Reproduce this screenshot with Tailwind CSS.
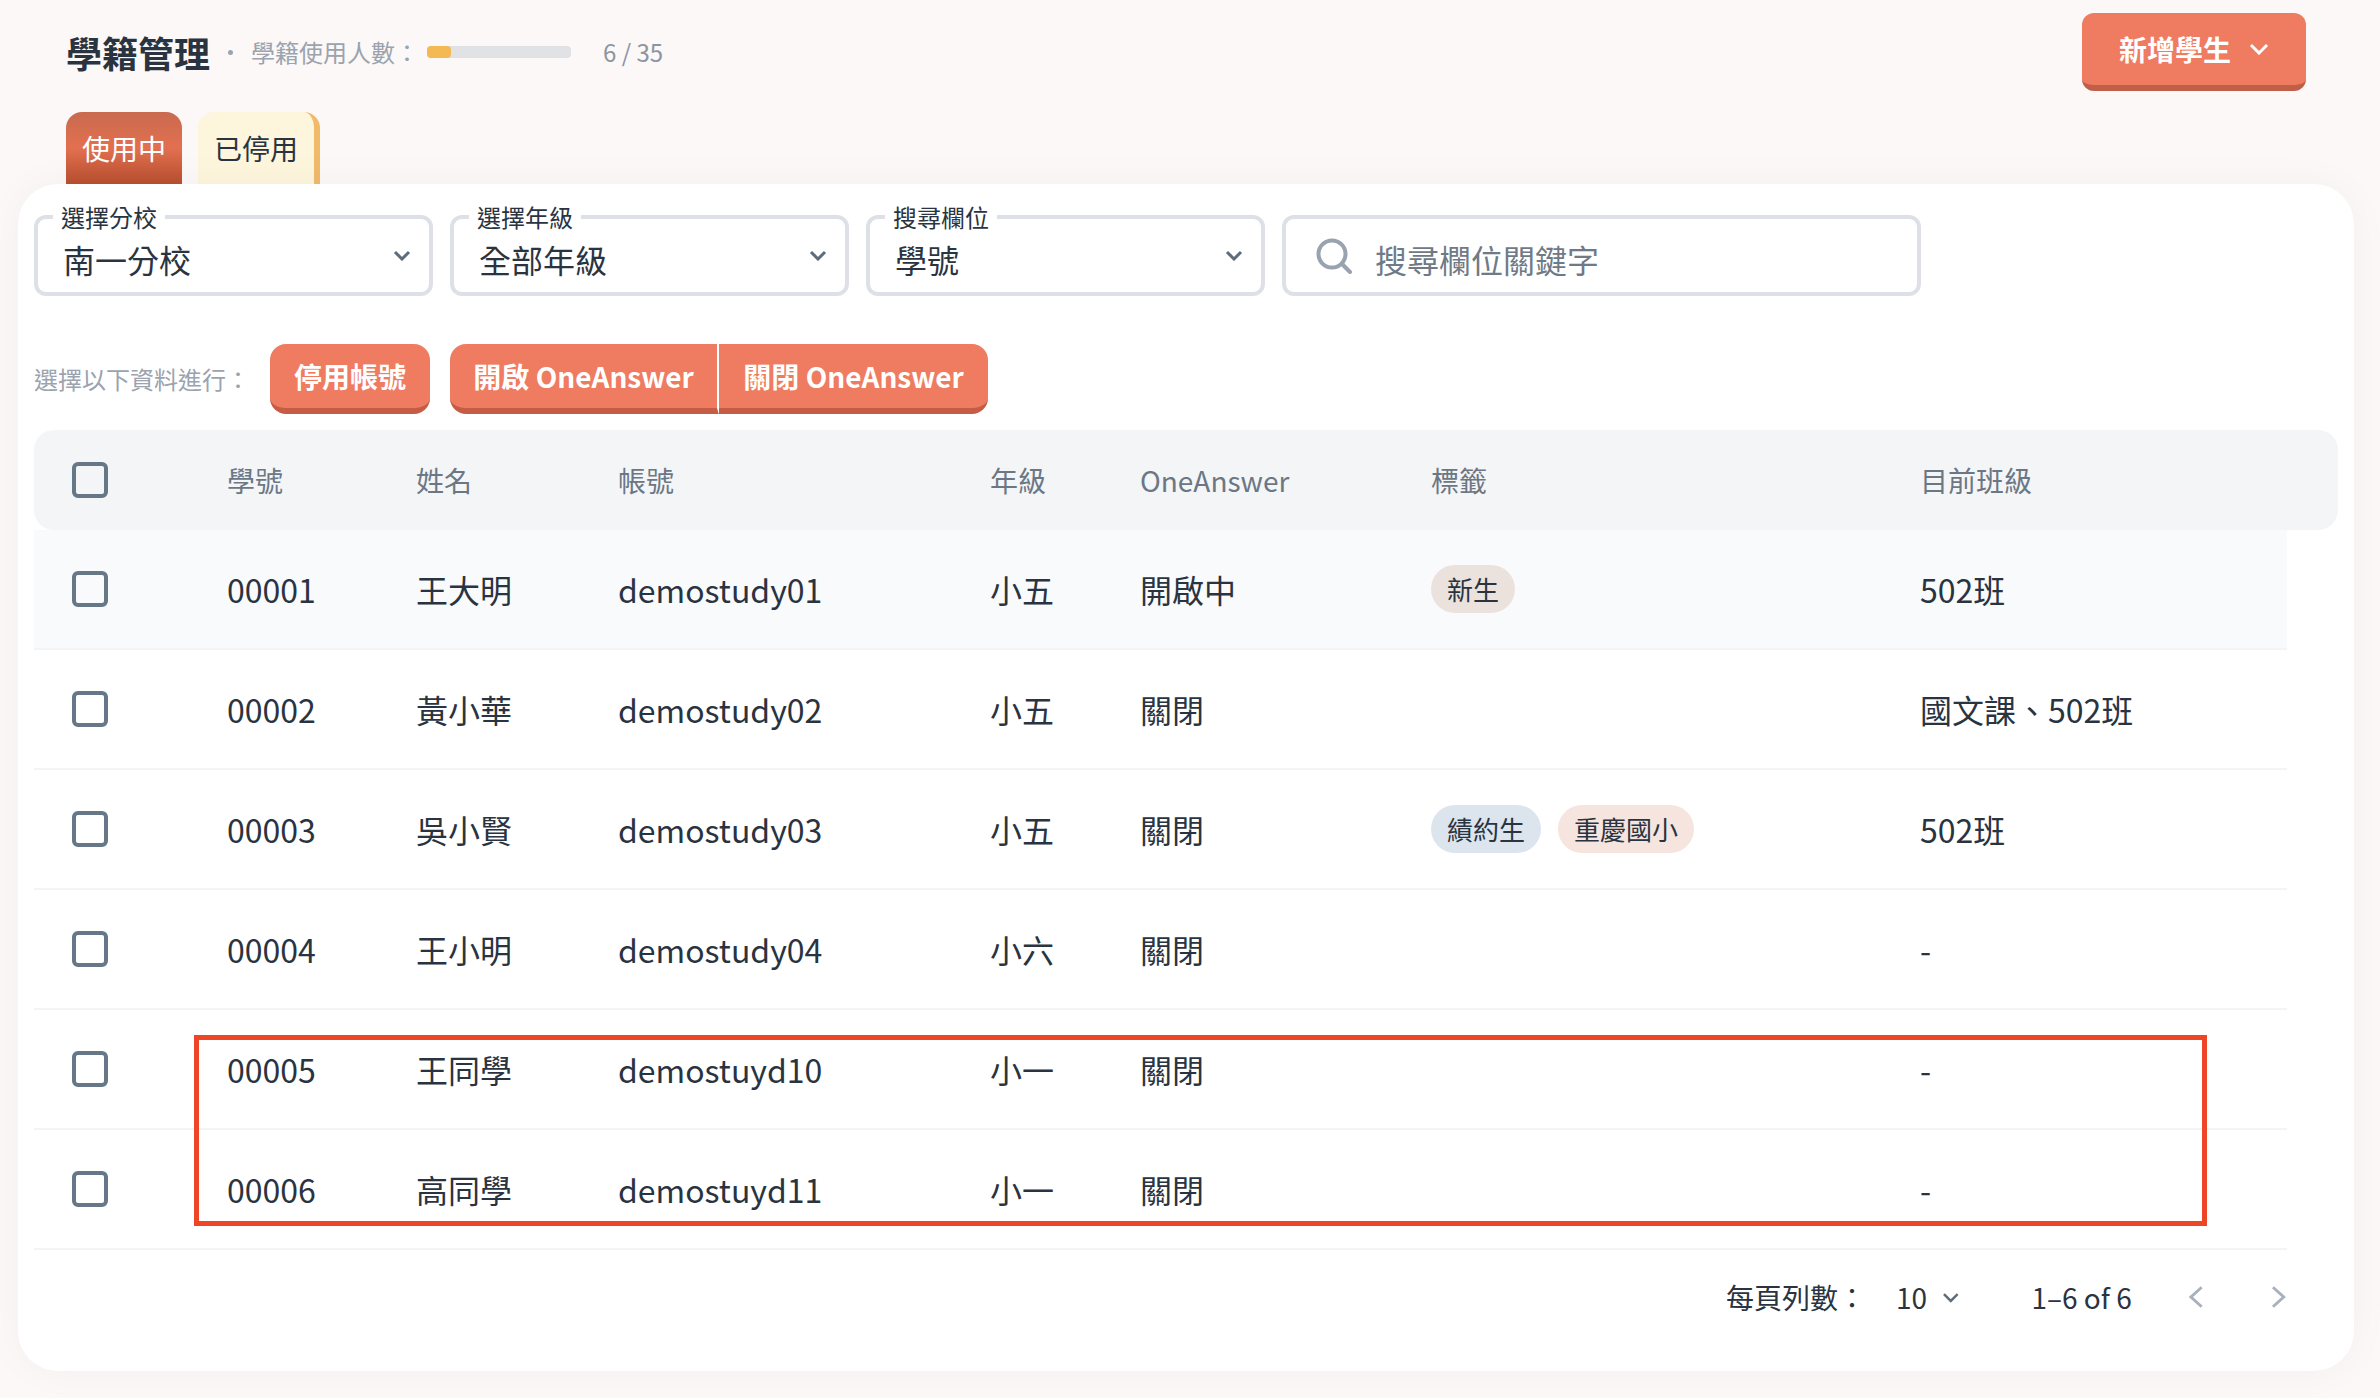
<!DOCTYPE html>
<html lang="zh-Hant">
<head>
    <meta charset="UTF-8">
    <title>學籍管理</title>
    <script src="https://cdn.jsdelivr.net/npm/@tailwindcss/browser@4"></script>
</head>
<body class="bg-[#fbf8f7] font-['Noto_Sans_CJK_TC',sans-serif] text-[#2a3441]">
<div class="w-[2380px] h-[1398px] overflow-hidden flex flex-col">

    <!-- Page header -->
    <div class="h-[112px] pl-[66px] pr-[74px] pt-[13px] flex items-start justify-between">
        <div class="flex items-center h-[78px]">
            <h1 class="text-[36px] font-bold leading-none">學籍管理</h1>
            <span class="ml-[18px] w-[5px] h-[5px] rounded-full bg-[#9ca3af]"></span>
            <span class="ml-[18px] text-[24px] text-[#9aa3ae]">學籍使用人數：</span>
            <div class="ml-[8px] w-[144px] h-[12px] rounded-[4px] bg-[#e1e2e5]">
                <div class="w-[24px] h-[12px] rounded-[4px] bg-[#f4b955]"></div>
            </div>
            <span class="ml-[32px] text-[24px] text-[#8b95a3]">6 / 35</span>
        </div>
        <button class="w-[224px] h-[78px] flex items-center justify-center gap-[18px] rounded-[12px] bg-[#ef7b60] border-b-[6px] border-[#c05f48] text-white text-[28px] font-bold">
            新增學生
            <svg class="w-[20px] h-[12px]" viewBox="0 0 20 12" fill="none" stroke="currentColor" stroke-width="3"><path d="M2 2l8 8 8-8"/></svg>
        </button>
    </div>

    <!-- Tabs -->
    <div class="h-[72px] pl-[66px] flex gap-[16px]">
        <div class="w-[116px] h-[72px] rounded-t-[16px] bg-gradient-to-b from-[#c96a50] via-[#e2704f] to-[#b84f30] text-white text-[28px] flex items-center justify-center">使用中</div>
        <div class="w-[122px] h-[72px] rounded-t-[16px] bg-[#fdf5dc] border-r-[6px] border-[#f1b96a] text-[28px] flex items-center justify-center">已停用</div>
    </div>

    <!-- Card -->
    <div class="ml-[18px] w-[2336px] h-[1187px] rounded-[40px] bg-white shadow-[0_0_40px_rgba(0,0,0,0.04)] pl-[16px] pt-[31px]">

        <!-- Filters -->
        <div class="flex gap-[17px]">
            <div class="relative w-[399px] h-[81px] rounded-[12px] border-[4px] border-[#dde0e6] pl-[25px] pr-[18px] flex items-center justify-between">
                <span class="absolute left-[15px] -top-[20px] px-[8px] bg-white text-[24px] leading-[36px]">選擇分校</span>
                <span class="text-[32px] pt-[6px]">南一分校</span>
                <svg class="w-[18px] h-[11px] text-[#5f6c7b]" viewBox="0 0 18 11" fill="none" stroke="currentColor" stroke-width="3"><path d="M2 2l7 7 7-7"/></svg>
            </div>
            <div class="relative w-[399px] h-[81px] rounded-[12px] border-[4px] border-[#dde0e6] pl-[25px] pr-[18px] flex items-center justify-between">
                <span class="absolute left-[15px] -top-[20px] px-[8px] bg-white text-[24px] leading-[36px]">選擇年級</span>
                <span class="text-[32px] pt-[6px]">全部年級</span>
                <svg class="w-[18px] h-[11px] text-[#5f6c7b]" viewBox="0 0 18 11" fill="none" stroke="currentColor" stroke-width="3"><path d="M2 2l7 7 7-7"/></svg>
            </div>
            <div class="relative w-[399px] h-[81px] rounded-[12px] border-[4px] border-[#dde0e6] pl-[25px] pr-[18px] flex items-center justify-between">
                <span class="absolute left-[15px] -top-[20px] px-[8px] bg-white text-[24px] leading-[36px]">搜尋欄位</span>
                <span class="text-[32px] pt-[6px]">學號</span>
                <svg class="w-[18px] h-[11px] text-[#5f6c7b]" viewBox="0 0 18 11" fill="none" stroke="currentColor" stroke-width="3"><path d="M2 2l7 7 7-7"/></svg>
            </div>
            <div class="w-[639px] h-[81px] rounded-[12px] border-[4px] border-[#dde0e6] pl-[30px] flex items-center gap-[23px]">
                <svg class="w-[36px] h-[36px] text-[#98a2b0]" viewBox="0 0 36 36" fill="none" stroke="currentColor" stroke-width="4"><circle cx="16" cy="16" r="13.5"/><path d="M26 26l8 8" stroke-linecap="round"/></svg>
                <span class="text-[32px] text-[#6f7a87] pt-[6px]">搜尋欄位關鍵字</span>
            </div>
        </div>

        <!-- Bulk actions -->
        <div class="mt-[48px] flex items-center">
            <span class="text-[24px] text-[#9aa3ae] w-[236px]">選擇以下資料進行：</span>
            <button class="w-[160px] h-[70px] rounded-[16px] bg-[#ef7b60] border-b-[6px] border-[#c55c45] text-white text-[28px] font-bold">停用帳號</button>
            <div class="ml-[20px] flex">
                <button class="w-[269px] h-[70px] rounded-l-[16px] bg-[#ef7b60] border-b-[6px] border-[#c55c45] border-r-[2px] border-r-white text-white text-[28px] font-bold">開啟 OneAnswer</button>
                <button class="w-[269px] h-[70px] rounded-r-[16px] bg-[#ef7b60] border-b-[6px] border-[#c55c45] text-white text-[28px] font-bold">關閉 OneAnswer</button>
            </div>
        </div>

        <!-- Table -->
        <div class="relative mt-[16px]">
            <div class="w-[2304px] h-[100px] rounded-[20px] bg-[#f4f5f7] grid grid-cols-[193px_189px_202px_372px_150px_291px_489px_1fr] items-center text-[28px] text-[#6b7785]">
                <div class="pl-[38px]"><span class="block w-[36px] h-[36px] rounded-[6px] border-[4px] border-[#667788]"></span></div>
                <div>學號</div><div>姓名</div><div>帳號</div><div>年級</div><div>OneAnswer</div><div>標籤</div><div>目前班級</div>
            </div>

            <div class="w-[2253px] h-[120px] bg-[#f9fafc] border-b-[2px] border-[#f3f4f6] grid grid-cols-[193px_189px_202px_372px_150px_291px_489px_1fr] items-center text-[32px]">
                <div class="pl-[38px]"><span class="block w-[36px] h-[36px] rounded-[6px] border-[4px] border-[#667788]"></span></div>
                <div>00001</div><div>王大明</div><div>demostudy01</div><div>小五</div><div>開啟中</div>
                <div class="flex gap-[17px]"><span class="h-[48px] px-[16px] rounded-[24px] bg-[#ebe2dd] text-[26px] leading-[48px]">新生</span></div>
                <div>502班</div>
            </div>
            <div class="w-[2253px] h-[120px] border-b-[2px] border-[#f3f4f6] grid grid-cols-[193px_189px_202px_372px_150px_291px_489px_1fr] items-center text-[32px]">
                <div class="pl-[38px]"><span class="block w-[36px] h-[36px] rounded-[6px] border-[4px] border-[#667788]"></span></div>
                <div>00002</div><div>黃小華</div><div>demostudy02</div><div>小五</div><div>關閉</div>
                <div></div>
                <div>國文課、502班</div>
            </div>
            <div class="w-[2253px] h-[120px] border-b-[2px] border-[#f3f4f6] grid grid-cols-[193px_189px_202px_372px_150px_291px_489px_1fr] items-center text-[32px]">
                <div class="pl-[38px]"><span class="block w-[36px] h-[36px] rounded-[6px] border-[4px] border-[#667788]"></span></div>
                <div>00003</div><div>吳小賢</div><div>demostudy03</div><div>小五</div><div>關閉</div>
                <div class="flex gap-[17px]">
                    <span class="h-[48px] px-[16px] rounded-[24px] bg-[#dce5ee] text-[26px] leading-[48px]">績約生</span>
                    <span class="h-[48px] px-[16px] rounded-[24px] bg-[#f6e4de] text-[26px] leading-[48px]">重慶國小</span>
                </div>
                <div>502班</div>
            </div>
            <div class="w-[2253px] h-[120px] border-b-[2px] border-[#f3f4f6] grid grid-cols-[193px_189px_202px_372px_150px_291px_489px_1fr] items-center text-[32px]">
                <div class="pl-[38px]"><span class="block w-[36px] h-[36px] rounded-[6px] border-[4px] border-[#667788]"></span></div>
                <div>00004</div><div>王小明</div><div>demostudy04</div><div>小六</div><div>關閉</div>
                <div></div>
                <div>-</div>
            </div>
            <div class="w-[2253px] h-[120px] border-b-[2px] border-[#f3f4f6] grid grid-cols-[193px_189px_202px_372px_150px_291px_489px_1fr] items-center text-[32px]">
                <div class="pl-[38px]"><span class="block w-[36px] h-[36px] rounded-[6px] border-[4px] border-[#667788]"></span></div>
                <div>00005</div><div>王同學</div><div>demostuyd10</div><div>小一</div><div>關閉</div>
                <div></div>
                <div>-</div>
            </div>
            <div class="w-[2253px] h-[120px] border-b-[2px] border-[#f3f4f6] grid grid-cols-[193px_189px_202px_372px_150px_291px_489px_1fr] items-center text-[32px]">
                <div class="pl-[38px]"><span class="block w-[36px] h-[36px] rounded-[6px] border-[4px] border-[#667788]"></span></div>
                <div>00006</div><div>高同學</div><div>demostuyd11</div><div>小一</div><div>關閉</div>
                <div></div>
                <div>-</div>
            </div>

            <!-- Red highlight drawn over the last two rows -->
            <div class="absolute left-[160px] top-[605px] w-[2013px] h-[191px] border-[5px] border-[#ef4527]"></div>

            <!-- Pagination -->
            <div class="w-[2253px] h-[94px] flex items-center text-[28px] pl-[1692px]">
                <span class="w-[174px]">每頁列數：</span>
                <span class="w-[47px]">10</span>
                <svg class="w-[18px] h-[11px] text-[#5f6c7b]" viewBox="0 0 18 11" fill="none" stroke="currentColor" stroke-width="2.5"><path d="M2 2l7 7 7-7"/></svg>
                <span class="ml-[72px] w-[160px]">1–6 of 6</span>
                <svg class="w-[16px] h-[24px] text-[#a8b1bc]" viewBox="0 0 16 24" fill="none" stroke="currentColor" stroke-width="3"><path d="M14 2L3 12l11 10"/></svg>
                <svg class="ml-[68px] w-[16px] h-[24px] text-[#a8b1bc]" viewBox="0 0 16 24" fill="none" stroke="currentColor" stroke-width="3"><path d="M2 2l11 10L2 22"/></svg>
            </div>
        </div>
    </div>
</div>
</body>
</html>
